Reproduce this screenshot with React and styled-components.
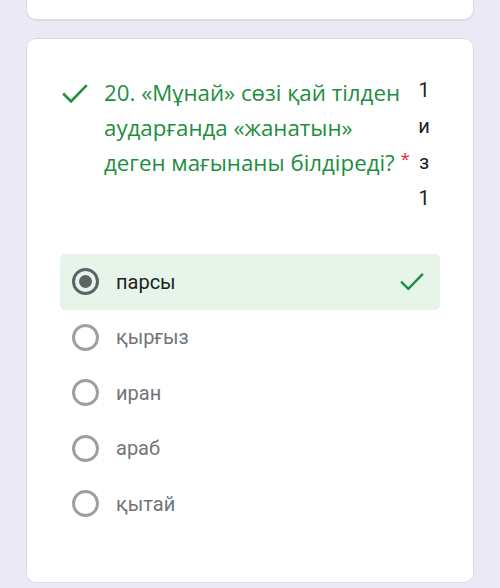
import React from "react";
import styled, { createGlobalStyle } from "styled-components";

const GlobalStyle = createGlobalStyle`
  html, body {
    margin: 0;
    padding: 0;
    background: #ebe9f5;
  }
  body {
    font-family: Roboto, "Open Sans", sans-serif;
  }
`;

const options = [
  { label: "парсы", selected: true },
  { label: "қырғыз" },
  { label: "иран" },
  { label: "араб" },
  { label: "қытай" },
];

const Check = ({ size = 26 }) => (
  <svg width={size} height={size * 0.8} viewBox="0 0 26 21" fill="none">
    <path
      d="M2 11.5 L9 18.5 L24 3"
      stroke="#1e8e3e"
      strokeWidth="2.6"
      strokeLinecap="square"
    />
  </svg>
);

const App = () => {
  return (
    <Page>
      <GlobalStyle />
      <TopCard />
      <Card>
        <Header>
          <CheckWrap>
            <Check />
          </CheckWrap>
          <Title>
            20. «Мұнай» сөзі қай тілден аударғанда «жанатын» деген мағынаны{" "}
            <NoWrap>
              білдіреді? <Star>*</Star>
            </NoWrap>
          </Title>
          <Points>
            <span>1</span>
            <span>и</span>
            <span>з</span>
            <span>1</span>
          </Points>
        </Header>

        <Options>
          {options.map((o) => (
            <Option key={o.label} $selected={o.selected}>
              <Radio $selected={o.selected} />
              <Label $selected={o.selected}>{o.label}</Label>
              {o.selected && (
                <RightCheck>
                  <Check size={24} />
                </RightCheck>
              )}
            </Option>
          ))}
        </Options>
      </Card>
    </Page>
  );
};

const Page = styled.div`
  display: flex;
  flex-direction: column;
  align-items: center;
  gap: 18px;
  height: 588px;
  overflow: hidden;
`;

const TopCard = styled.div`
  width: 448px;
  height: 20px;
  background: #fff;
  border: 1px solid #dcdae4;
  border-top: none;
  border-radius: 0 0 10px 10px;
  box-sizing: border-box;
  box-shadow: 0 1px 1px rgba(0, 0, 0, 0.05);
`;

const Card = styled.div`
  width: 448px;
  height: 545px;
  background: #fff;
  border: 1px solid #dcdae4;
  border-radius: 10px;
  box-sizing: border-box;
  padding: 36px 33px 0;
`;

const Header = styled.div`
  display: flex;
  align-items: flex-start;
`;

const CheckWrap = styled.div`
  padding: 8px 0 0 2px;
  margin-right: 16px;
  display: flex;
`;

const Title = styled.div`
  width: 310px;
  font-family: "Open Sans", sans-serif;
  font-size: 22.3px;
  line-height: 35px;
  color: #1e8e3e;
`;

const NoWrap = styled.span`
  white-space: nowrap;
`;

const Star = styled.span`
  color: #d93025;
  font-size: 17px;
  vertical-align: 6px;
  line-height: 0;
`;

const Points = styled.div`
  display: flex;
  flex-direction: column;
  align-items: center;
  width: 20px;
  margin-top: -3px;
  font-family: Roboto, sans-serif;
  font-size: 20px;
  line-height: 36px;
  color: #202124;
`;

const Options = styled.div`
  display: flex;
  flex-direction: column;
  margin-top: 38px;
`;

const Option = styled.div`
  display: flex;
  align-items: center;
  height: 55.5px;
  padding-left: 12px;
  padding-right: 16px;
  border-radius: 5px;
  background: ${(p) => (p.$selected ? "#e6f4ea" : "transparent")};
`;

const Radio = styled.div`
  width: 27px;
  height: 27px;
  box-sizing: border-box;
  border-radius: 50%;
  border: 3px solid ${(p) => (p.$selected ? "#5f6368" : "#9aa0a6")};
  display: flex;
  align-items: center;
  justify-content: center;
  flex-shrink: 0;

  &::after {
    content: "";
    display: ${(p) => (p.$selected ? "block" : "none")};
    width: 13px;
    height: 13px;
    border-radius: 50%;
    background: #5f6368;
  }
`;

const Label = styled.span`
  margin-left: 17px;
  font-family: Roboto, sans-serif;
  font-size: 20px;
  color: ${(p) => (p.$selected ? "#202124" : "#70757a")};
  flex: 1;
`;

const RightCheck = styled.div`
  display: flex;
`;

export default App;
